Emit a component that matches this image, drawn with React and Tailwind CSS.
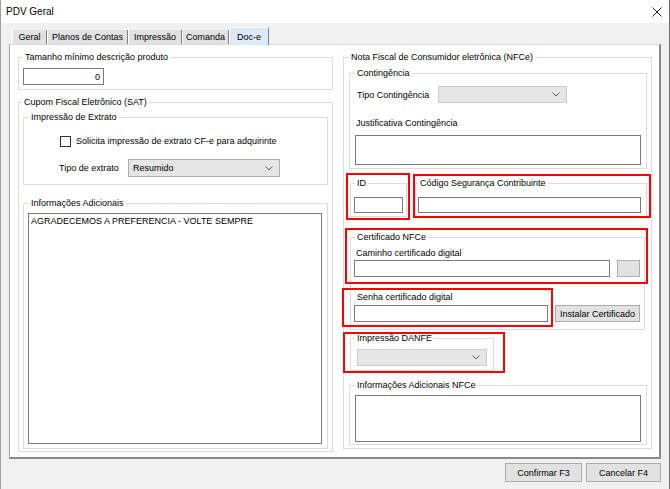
import React from 'react'

const Group = ({ label, lx, className = '', children }) => (
  <fieldset className={`min-w-0 border border-[#dcdcdc] ${className}`}>
    <legend className={`${lx} px-[2px] leading-[12px]`}>{label}</legend>
    {children}
  </fieldset>
)

const Box = ({ className = '', children }) => (
  <div className={`border border-[#7a7a7a] bg-white ${className}`}>{children}</div>
)

const Chevron = () => (
  <svg width="8" height="5" viewBox="0 0 8 5" className="shrink-0">
    <polyline points="0.5,0.5 4,4 7.5,0.5" fill="none" stroke="#606060" strokeWidth="1" />
  </svg>
)

const Combo = ({ className = '', text, disabled }) => (
  <div
    className={`flex items-center justify-between pl-[4px] pr-[6px] ${
      disabled ? 'border border-[#cccccc] bg-[#e6e6e6]' : 'border border-[#adadad] bg-[#e5e5e5]'
    } ${className}`}
  >
    <span>{text}</span>
    <Chevron />
  </div>
)

const Btn = ({ className = '', children }) => (
  <div className={`flex items-center justify-center border border-[#adadad] bg-[#e1e1e1] ${className}`}>{children}</div>
)

const tabs = ['Geral', 'Planos de Contas', 'Impressão', 'Comanda']
const tabW = ['w-[35px]', 'w-[81px]', 'w-[54px]', 'w-[47px]']

export default function App() {
  return (
    <div className="flex h-[489px] w-[670px] flex-col overflow-hidden border-l border-r border-l-[#a0a0a0] border-r-[#707070] bg-[#f0f0f0] font-['Liberation_Sans',Arial,sans-serif] text-[9px] leading-[12px] text-black">
      {/* title bar */}
      <div className="flex h-[23px] shrink-0 items-center justify-between bg-white pl-[5px] pr-[7px]">
        <span className="text-[10px]">PDV Geral</span>
        <svg width="10" height="10" viewBox="0 0 10 10">
          <path d="M0.5 0.5 L9.5 9.5 M9.5 0.5 L0.5 9.5" stroke="#222" strokeWidth="1" />
        </svg>
      </div>

      {/* tabs */}
      <div className="flex h-[21px] shrink-0 items-end pl-[11px]">
        {tabs.map((t, i) => (
          <div
            key={t}
            className={`flex h-[14px] items-center justify-center border-l border-r border-l-white border-r-[#808080] bg-[#e1e1e1] ${tabW[i]}`}
          >
            {t}
          </div>
        ))}
        <div className="relative z-10 -mb-[1px] flex h-[18px] w-[40px] items-center justify-center border-l border-r border-t border-l-white border-r-[#808080] border-t-white bg-[#dde9f6]">
          Doc-e
        </div>
      </div>

      {/* tab page */}
      <div className="relative ml-[8px] flex h-[415px] w-[652px] shrink-0 border-b-2 border-l border-r-2 border-t border-b-[#8a8a8a] border-l-[#a0a0a0] border-r-[#8a8a8a] border-t-[#d9d9d9] bg-white pl-[8px] pt-[6px]">
        {/* left column */}
        <div className="flex w-[315px] flex-col">
          <Group label="Tamanho mínimo descrição produto" lx="ml-[4px]">
            <Box className="mb-[4px] ml-[4px] mt-[5px] flex h-[17px] w-[81px] items-center justify-end pr-[3px]">0</Box>
          </Group>
          <Group label="Cupom Fiscal Eletrônico (SAT)" lx="ml-[3px]" className="mt-[6px]">
            <div className="px-[4px] pb-[2px] pt-[3px]">
              <Group label="Impressão de Extrato" lx="ml-[5px]">
                <div className="flex items-center pl-[36px] pt-[12px]">
                  <div className="h-[11px] w-[11px] border border-[#333333] bg-white" />
                  <span className="ml-[5px]">Solicita impressão de extrato CF-e para adquirinte</span>
                </div>
                <div className="mb-[7px] mt-[12px] flex items-center pl-[35px]">
                  <span className="w-[69px]">Tipo de extrato</span>
                  <Combo className="h-[18px] w-[152px]" text="Resumido" />
                </div>
              </Group>
              <Group label="Informações Adicionais" lx="ml-[5px]" className="mt-[12px]">
                <Box className="mb-[4px] ml-[4px] mt-[4px] h-[231px] w-[294px] px-[2px] pt-[1px]">
                  AGRADECEMOS A PREFERENCIA - VOLTE SEMPRE
                </Box>
              </Group>
            </div>
          </Group>
        </div>

        {/* right column */}
        <div className="ml-[10px] w-[309px]">
          <Group label="Nota Fiscal de Consumidor eletrônica (NFCe)" lx="ml-[5px]">
            <div className="pb-[3px] pl-[5px] pr-[4px] pt-[4px]">
              <Group label="Contingência" lx="ml-[5px]">
                <div className="px-[5px] pb-[3px] pt-[7px]">
                  <div className="flex items-center">
                    <span className="ml-[2px] w-[81px]">Tipo Contingência</span>
                    <Combo className="h-[17px] w-[129px]" disabled />
                  </div>
                  <div className="ml-[1px] mt-[14px]">Justificativa Contingência</div>
                  <Box className="mt-[6px] h-[30px] w-[286px]" />
                </div>
              </Group>

              <div className="mt-[8px] flex">
                <Group label="ID" lx="ml-[4px]" className="ml-[1px] w-[57px]">
                  <div className="pb-[3px] pl-[3px] pt-[8px]">
                    <Box className="h-[16px] w-[49px]" />
                  </div>
                </Group>
                <Group label="Código Segurança Contribuinte" lx="ml-[2px]" className="ml-[8px] w-[232px]">
                  <div className="pb-[3px] pl-[2px] pt-[8px]">
                    <Box className="h-[16px] w-[223px]" />
                  </div>
                </Group>
              </div>

              <Group label="Certificado NFCe" lx="ml-[4px]" className="ml-[1px] mt-[14px] w-[295px]">
                <div className="pb-[7px] pl-[3px] pt-[4px]">
                  <div className="ml-[2px]">Caminho certificado digital</div>
                  <div className="mt-[1px] flex gap-[7px]">
                    <Box className="h-[17px] w-[256px]" />
                    <Btn className="h-[17px] w-[23px]" />
                  </div>
                  <div className="ml-[3px] mt-[14px]">Senha certificado digital</div>
                  <div className="mt-[2px] flex gap-[7px]">
                    <Box className="h-[17px] w-[194px]" />
                    <Btn className="h-[17px] w-[85px]">Instalar Certificado</Btn>
                  </div>
                </div>
              </Group>

              <Group label="Impressão DANFE" lx="ml-[4px]" className="ml-[1px] mt-[2px] w-[144px]">
                <div className="pb-[4px] pl-[6px] pt-[5px]">
                  <Combo className="h-[17px] w-[130px]" disabled />
                </div>
              </Group>

              <Group label="Informações Adicionais NFCe" lx="ml-[5px]" className="mt-[8px]">
                <div className="pb-[2px] pl-[5px] pt-[4px]">
                  <Box className="h-[47px] w-[286px]" />
                </div>
              </Group>
            </div>
          </Group>
        </div>

        {/* red annotation frames */}
        <div className="pointer-events-none absolute left-[336px] top-[128px] h-[47px] w-[64px] border-2 border-[#ff0000]" />
        <div className="pointer-events-none absolute left-[403px] top-[129px] h-[44px] w-[238px] border-2 border-[#ff0000]" />
        <div className="pointer-events-none absolute left-[335px] top-[183px] h-[56px] w-[303px] border-2 border-[#ff0000]" />
        <div className="pointer-events-none absolute left-[332px] top-[243px] h-[39px] w-[211px] border-2 border-[#ff0000]" />
        <div className="pointer-events-none absolute left-[333px] top-[287px] h-[41px] w-[162px] border-2 border-[#ff0000]" />
      </div>

      {/* bottom buttons */}
      <div className="mt-[4px] flex justify-end gap-[4px] pr-[8px]">
        <Btn className="h-[19px] w-[77px]">Confirmar F3</Btn>
        <Btn className="h-[19px] w-[75px]">Cancelar F4</Btn>
      </div>
    </div>
  )
}
